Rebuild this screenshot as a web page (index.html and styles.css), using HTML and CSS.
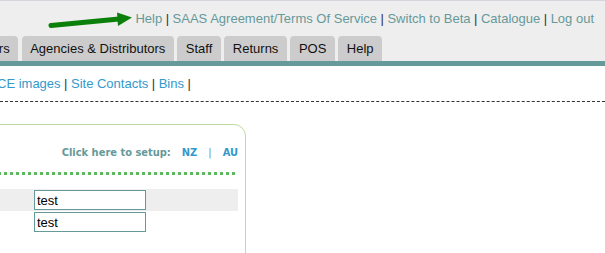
FILE: index.html
```html
<!DOCTYPE html>
<html>
<head>
<meta charset="utf-8">
<link rel="stylesheet" href="styles.css">
</head>
<body>
<div class="page">
  <header class="top">
    <nav class="toplinks">
      <a href="#">Help</a><span class="sep">|</span><a href="#">SAAS Agreement/Terms Of Service</a><span class="sep">|</span><a href="#">Switch to Beta</a><span class="sep">|</span><a href="#">Catalogue</a><span class="sep">|</span><a href="#">Log out</a>
    </nav>
    <svg class="arrow" width="140" height="30" viewBox="0 0 140 30">
      <path d="M51 25.5 L119 19" stroke="#0a800a" stroke-width="5" stroke-linecap="round" fill="none"/>
      <polygon points="117,12.5 132,17.5 118,26" fill="#0a800a"/>
    </svg>
    <div class="tabs">
      <a class="tab tab-cut" href="#">Suppliers</a>
      <a class="tab" href="#">Agencies &amp; Distributors</a>
      <a class="tab" href="#">Staff</a>
      <a class="tab" href="#">Returns</a>
      <a class="tab" href="#">POS</a>
      <a class="tab" href="#">Help</a>
    </div>
  </header>
  <div class="sublinks">
    <a href="#">CE images</a><span class="sep">|</span><a href="#">Site Contacts</a><span class="sep">|</span><a href="#">Bins</a><span class="sep">|</span>
  </div>
  <section class="panel">
    <div class="setup">
      <span class="setup-label">Click here to setup:</span>
      <a href="#">NZ</a>
      <span class="setup-sep">|</span>
      <a href="#">AU</a>
    </div>
    <div class="dots"></div>
    <div class="row row-alt">
      <span class="label">Name</span>
      <input class="field" type="text" value="test">
    </div>
    <div class="row">
      <span class="label">Code</span>
      <input class="field" type="text" value="test">
    </div>
  </section>
</div>
</body>
</html>
```

FILE: styles.css
```css
html, body {
  margin: 0;
  padding: 0;
  background: #fff;
  overflow: hidden;
}
.page {
  width: 605px;
  height: 253px;
  overflow: hidden;
  font-family: "Liberation Sans", Arial, sans-serif;
  font-size: 13px;
  position: relative;
}
a { text-decoration: none; }

.top {
  background: #eeeeee;
  border-top: 1px solid #d5d5dc;
  border-bottom: 5px solid #669999;
}
.toplinks {
  display: flex;
  justify-content: flex-end;
  padding: 10px 11px 0 0;
  line-height: 16px;
  height: 16px;
}
.toplinks a { color: #669999; }
.sep { color: #333; margin: 0 3.5px; }

.arrow {
  position: absolute;
  left: 0;
  top: 0;
}

.tabs {
  display: flex;
  gap: 3.5px;
  margin-top: 9px;
  height: 25px;
}
.tab {
  display: block;
  flex: none;
  background: #cccccc;
  color: #111;
  height: 25px;
  line-height: 25px;
  padding: 0 8.5px;
  border-radius: 4px 4px 0 0;
}
.tab-cut {
  margin-left: -53px;
}

.sublinks {
  padding: 10px 0 9px 0;
  line-height: 16px;
  border-bottom: 1px dashed #333;
  text-indent: -3px;
}
.sublinks a { color: #3399cc; }

.panel {
  margin: 22px 0 0 -300px;
  width: 537px;
  padding: 0 7px 30px 0;
  border: 1px solid #bddb9c;
  border-radius: 12px;
}
.setup {
  display: flex;
  justify-content: flex-end;
  align-items: baseline;
  padding-top: 20px;
  font-family: "DejaVu Sans Condensed", "DejaVu Sans", Verdana, sans-serif;
  font-stretch: condensed;
  font-weight: bold;
  font-size: 11px;
  line-height: 15px;
  color: #669999;
}
.setup a { color: #3399cc; margin-left: 11px; }
.setup-sep { font-weight: normal; margin-left: 11px; }
.dots {
  margin-top: 12px;
  height: 3px;
  background-image: linear-gradient(to right, #5cb85c 0 3px, transparent 3px 6px);
  background-size: 6px 3px;
  background-position: right top;
}
.row {
  display: flex;
  align-items: center;
  height: 22px;
}
.row-alt {
  margin-top: 14px;
  background: #eeeeee;
}
.label {
  width: 333px;
  flex: none;
  visibility: hidden;
}
.field {
  box-sizing: border-box;
  width: 112px;
  height: 20px;
  margin: 0;
  border: 1px solid #669999;
  padding: 0 2px;
  font-family: "Liberation Sans", Arial, sans-serif;
  font-size: 13px;
  color: #000;
  background: #fff;
  outline: none;
}
```
